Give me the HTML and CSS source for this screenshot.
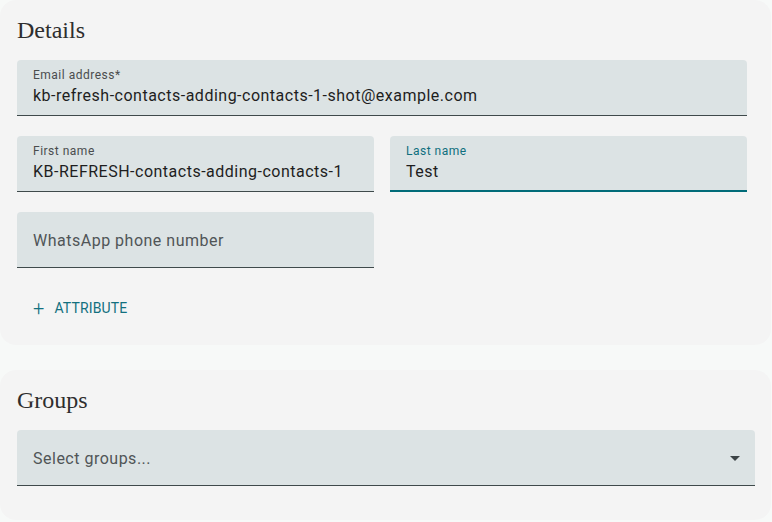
FILE: index.html
```html
<!DOCTYPE html>
<html lang="en">
<head>
    <meta charset="UTF-8">
    <meta name="viewport" content="width=device-width, initial-scale=1.0">
    <title>Contact details</title>
    <link rel="stylesheet" href="styles.css">
</head>
<body>
    <div class="card details">
        <h2 class="card-title">Details</h2>

        <div class="field">
            <label>Email address*</label>
            <div class="value">kb-refresh-contacts-adding-contacts-1-shot@example.com</div>
        </div>

        <div class="row">
            <div class="field">
                <label>First name</label>
                <div class="value">KB-REFRESH-contacts-adding-contacts-1</div>
            </div>
            <div class="field focused">
                <label>Last name</label>
                <div class="value">Test</div>
            </div>
        </div>

        <div class="row">
            <div class="field empty">
                <div class="placeholder">WhatsApp phone number</div>
            </div>
        </div>

        <button class="add-btn"><span class="plus">+</span>Attribute</button>
    </div>

    <div class="card groups">
        <h2 class="card-title">Groups</h2>

        <div class="field empty select">
            <div class="placeholder">Select groups...</div>
            <svg class="arrow" width="10" height="5" viewBox="0 0 10 5"><path d="M0 0 L10 0 L5 5 Z" fill="#3c4446"/></svg>
        </div>
    </div>
</body>
</html>
```

FILE: styles.css
```css
* {
    margin: 0;
    padding: 0;
    box-sizing: border-box;
}

body {
    background: #f7f9f8;
    font-family: Roboto, "Liberation Sans", sans-serif;
    color: #1e1e1e;
    width: 772px;
}

.card {
    width: 771px;
    background: #f4f4f4;
    border-radius: 16px;
    padding: 16px 24px 19px 17px;
}

.groups {
    margin-top: 25px;
    padding: 16px 16px 34px 17px;
}

.card-title {
    font-family: "Liberation Serif", serif;
    font-weight: 400;
    font-size: 24px;
    line-height: 28px;
    color: #2e2e2e;
    margin-bottom: 16px;
}

.field {
    position: relative;
    height: 56px;
    background: #dce3e4;
    border-radius: 4px 4px 0 0;
    border-bottom: 1px solid #3f4a4b;
    padding: 8px 16px 0;
    letter-spacing: 0.5px;
}

.field label {
    display: block;
    font-size: 12px;
    line-height: 14px;
    color: #4a4d4e;
}

.field .value {
    margin-top: 4px;
    font-size: 16px;
    line-height: 20px;
    white-space: nowrap;
    overflow: hidden;
}

.field.focused {
    border-bottom: 2px solid #006b78;
}

.field.focused label {
    color: #0f6f7e;
}

.field.empty {
    display: flex;
    align-items: center;
    padding-top: 1px;
}

.placeholder {
    font-size: 16px;
    color: #505557;
}

.select {
    justify-content: space-between;
    padding-right: 15px;
}

.row {
    display: grid;
    grid-template-columns: 1fr 1fr;
    gap: 16px;
    margin-top: 20px;
}

.add-btn {
    display: flex;
    align-items: center;
    height: 36px;
    margin-top: 22px;
    padding: 0 16px;
    border: 0;
    background: none;
    font-family: Roboto, "Liberation Sans", sans-serif;
    font-size: 14px;
    font-weight: 400;
    letter-spacing: 0.15px;
    text-transform: uppercase;
    color: #12707f;
    cursor: pointer;
}

.add-btn .plus {
    font-size: 20px;
    font-weight: 300;
    margin-right: 10px;
    line-height: 1;
}
```
